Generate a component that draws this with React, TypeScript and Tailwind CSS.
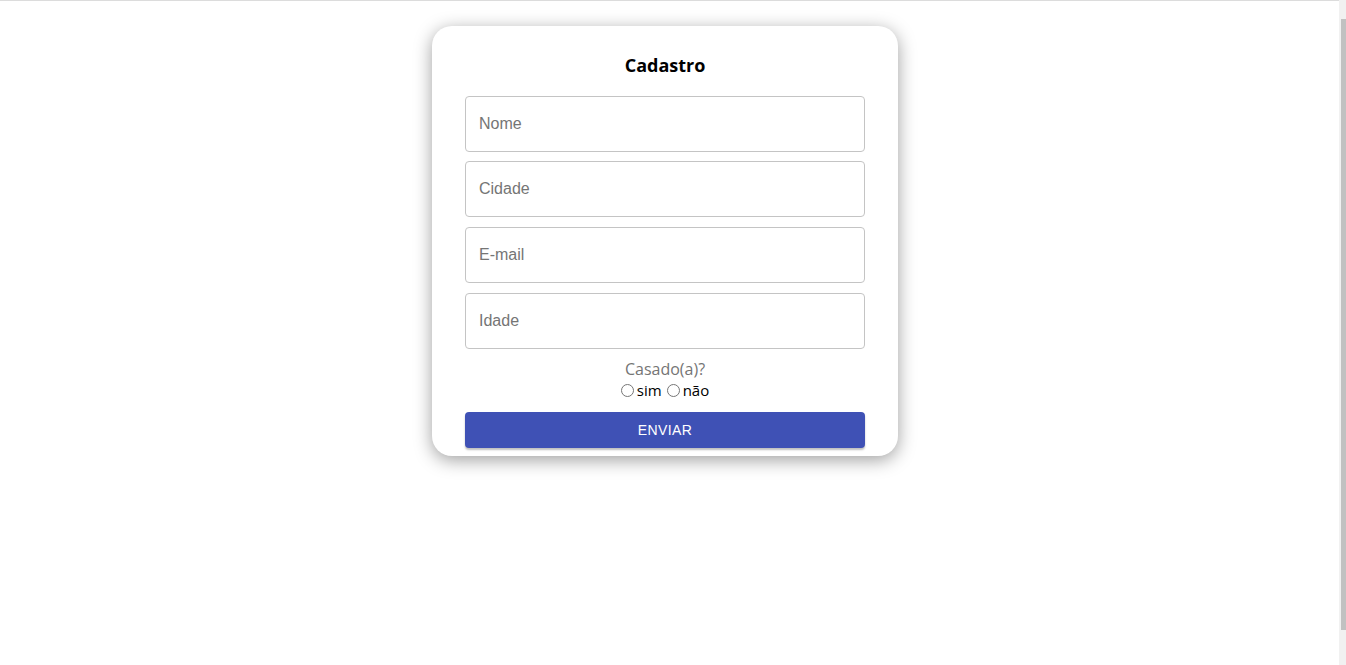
import React from 'react';

const fields = ['Nome', 'Cidade', 'E-mail', 'Idade'];

const App: React.FC = () => {
  return (
    <div className="flex h-[665px] w-full overflow-hidden bg-white">
      {/* Page */}
      <div className="flex w-[1339px] shrink-0 border-t border-[#dcdcdc]">
        <div className="flex w-[1330px] shrink-0 justify-center pt-[25px]">
          <div className="h-fit w-[466px] rounded-[20px] bg-white px-[33px] pt-[25px] pb-[8px] shadow-[0_4px_18px_rgba(0,0,0,0.38)]">
            <h2 className="mb-[17px] text-center text-[18px] leading-[28px] font-bold text-black [font-family:'Open_Sans',sans-serif]">
              Cadastro
            </h2>

            <form className="flex flex-col gap-[10px]" onSubmit={(e) => e.preventDefault()}>
              {fields.map((f, i) => (
                <input
                  key={f}
                  type="text"
                  placeholder={f}
                  className={`${i === 1 ? '-mt-[1px]' : ''} h-[56px] w-full rounded-[4px] border border-[#c4c4c4] px-[13px] text-[16px] text-black outline-none placeholder:text-[#757575] [font-family:'Liberation_Sans',Arial,sans-serif]`}
                />
              ))}

              <div className="text-center [font-family:'Open_Sans',sans-serif]">
                <p className="text-[16px] leading-[21px] text-[#757575]">Casado(a)?</p>
                <div className="flex items-center justify-center text-[15px] leading-[20px] text-black">
                  <label className="flex items-center">
                    <input type="radio" name="casado" className="mr-[3px] h-[13px] w-[13px]" />
                    sim
                  </label>
                  <label className="ml-[5px] flex items-center">
                    <input type="radio" name="casado" className="mr-[3px] h-[13px] w-[13px]" />
                    não
                  </label>
                </div>
              </div>

              <button
                type="submit"
                className="mt-[2px] h-[36px] w-full rounded-[4px] bg-[#3f51b5] text-[14px] tracking-[0.4px] text-white uppercase shadow-[0_2px_2px_rgba(0,0,0,0.25)] [font-family:'Liberation_Sans',Arial,sans-serif]"
              >
                Enviar
              </button>
            </form>
          </div>
        </div>
      </div>

      {/* Scrollbar */}
      <div className="flex w-[7px] flex-col items-end bg-[#f1f1f1] pt-[19px] pb-[35px]">
        <div className="w-[5px] flex-1 bg-[#c1c1c1]" />
      </div>
    </div>
  );
};

export default App;
